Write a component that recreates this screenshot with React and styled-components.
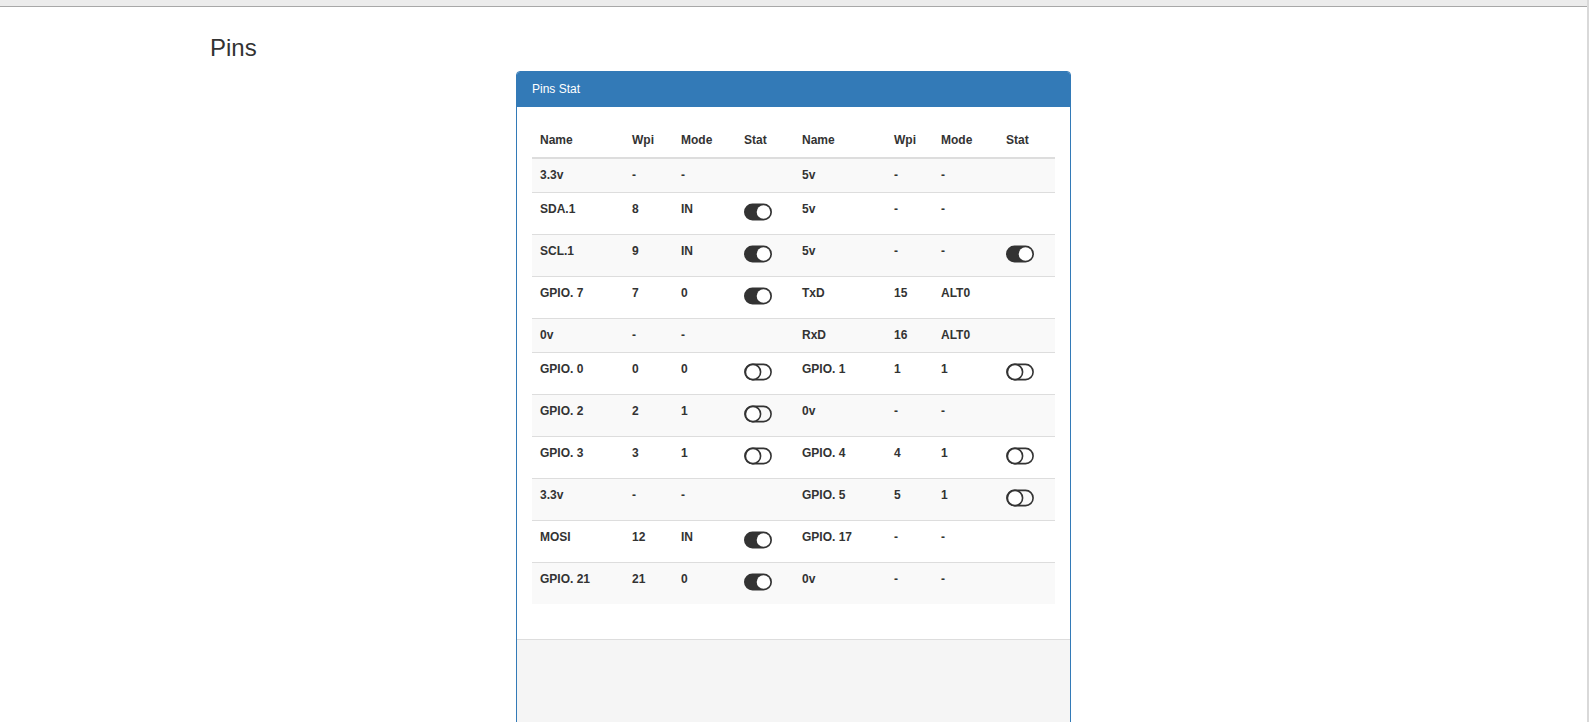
import styled, { createGlobalStyle } from "styled-components";

const GlobalStyle = createGlobalStyle`
  html, body {
    margin: 0;
    padding: 0;
    background: #fff;
  }
  body {
    font-family: "Liberation Sans", Arial, sans-serif;
    font-size: 12px;
    line-height: 1.42857;
    color: #333;
  }
`;

const Frame = styled.div`
  min-height: 100vh;
  border-right: 2px solid #d9d9d9;
  box-sizing: border-box;
  overflow: hidden;
`;

const TopStrip = styled.div`
  height: 6px;
  background: #ececec;
  border-bottom: 1px solid #a8a8a8;
`;

const Content = styled.div`
  padding-left: 210px;
`;

const Title = styled.h3`
  margin: 28px 0 0;
  font-size: 24px;
  font-weight: normal;
  line-height: 1.1;
  color: #333;
`;

const Panel = styled.div`
  margin: 10px 0 0 306px;
  width: 555px;
  box-sizing: border-box;
  border: 1px solid #337ab7;
  border-radius: 4px;
  background: #fff;
`;

const PanelHeading = styled.div`
  background: #337ab7;
  color: #fff;
  padding: 9px 15px;
  font-size: 12px;
  line-height: 17px;
  border-top-left-radius: 3px;
  border-top-right-radius: 3px;
`;

const PanelBody = styled.div`
  padding: 16px 15px 15px;
`;

const PanelFooter = styled.div`
  height: 120px;
  background: #f5f5f5;
  border-top: 1px solid #ddd;
`;

const Table = styled.table`
  width: 100%;
  border-collapse: collapse;
  border-spacing: 0;
  margin-bottom: 20px;
  table-layout: fixed;
`;

const Th = styled.th`
  text-align: left;
  font-weight: bold;
  padding: 9px 8px 8px;
  line-height: 17px;
  vertical-align: bottom;
  border-bottom: 2px solid #ddd;
`;

const Row = styled.tr`
  background: ${(p) => (p.$striped ? "#f9f9f9" : "#fff")};
`;

const Td = styled.td`
  padding: 8px;
  line-height: 17px;
  font-weight: bold;
  vertical-align: top;
  border-top: 1px solid #ddd;
  white-space: nowrap;
`;

const ToggleBox = styled.span`
  display: flex;
  align-items: flex-start;
  height: 23px;
  padding-top: 2px;
`;

function Toggle({ on }) {
  return (
    <ToggleBox>
      {on ? (
        <svg width="28" height="18" viewBox="0 0 28 18">
          <rect x="0" y="0.5" width="28" height="17" rx="8.5" fill="#333" />
          <circle cx="19.5" cy="9" r="6.8" fill="#fff" />
        </svg>
      ) : (
        <svg width="28" height="18" viewBox="0 0 28 18">
          <rect
            x="0.9"
            y="1.4"
            width="26.2"
            height="15.2"
            rx="7.6"
            fill="none"
            stroke="#333"
            strokeWidth="1.6"
          />
          <circle
            cx="9"
            cy="9"
            r="7.6"
            fill="#fff"
            stroke="#333"
            strokeWidth="1.6"
          />
        </svg>
      )}
    </ToggleBox>
  );
}

const widths = [92, 49, 63, 58, 92, 47, 65, 57];
const headers = ["Name", "Wpi", "Mode", "Stat", "Name", "Wpi", "Mode", "Stat"];

// stat: null = none, true = on, false = off
const rows = [
  [["3.3v", "-", "-", null], ["5v", "-", "-", null]],
  [["SDA.1", "8", "IN", true], ["5v", "-", "-", null]],
  [["SCL.1", "9", "IN", true], ["5v", "-", "-", true]],
  [["GPIO. 7", "7", "0", true], ["TxD", "15", "ALT0", null]],
  [["0v", "-", "-", null], ["RxD", "16", "ALT0", null]],
  [["GPIO. 0", "0", "0", false], ["GPIO. 1", "1", "1", false]],
  [["GPIO. 2", "2", "1", false], ["0v", "-", "-", null]],
  [["GPIO. 3", "3", "1", false], ["GPIO. 4", "4", "1", false]],
  [["3.3v", "-", "-", null], ["GPIO. 5", "5", "1", false]],
  [["MOSI", "12", "IN", true], ["GPIO. 17", "-", "-", null]],
  [["GPIO. 21", "21", "0", true], ["0v", "-", "-", null]],
];

function PinCells({ pin }) {
  const [name, wpi, mode, stat] = pin;
  return (
    <>
      <Td>{name}</Td>
      <Td>{wpi}</Td>
      <Td>{mode}</Td>
      <Td>{stat !== null && <Toggle on={stat} />}</Td>
    </>
  );
}

export default function App() {
  return (
    <Frame>
      <GlobalStyle />
      <TopStrip />
      <Content>
        <Title>Pins</Title>
        <Panel>
          <PanelHeading>Pins Stat</PanelHeading>
          <PanelBody>
            <Table>
              <colgroup>
                {widths.map((w, i) => (
                  <col key={i} style={{ width: w }} />
                ))}
              </colgroup>
              <thead>
                <tr>
                  {headers.map((h, i) => (
                    <Th key={i}>{h}</Th>
                  ))}
                </tr>
              </thead>
              <tbody>
                {rows.map((r, i) => (
                  <Row key={i} $striped={i % 2 === 0}>
                    <PinCells pin={r[0]} />
                    <PinCells pin={r[1]} />
                  </Row>
                ))}
              </tbody>
            </Table>
          </PanelBody>
          <PanelFooter />
        </Panel>
      </Content>
    </Frame>
  );
}
